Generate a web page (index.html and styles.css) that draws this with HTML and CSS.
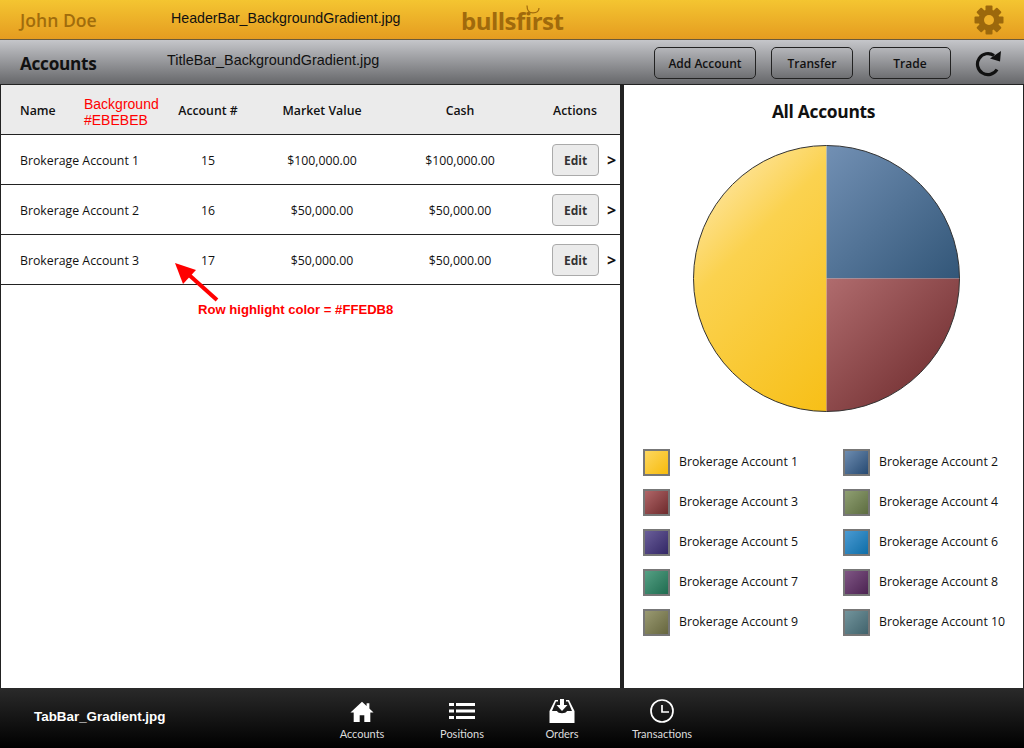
FILE: index.html

```html
<!DOCTYPE html>
<html>
    <head>
        <title>Accounts</title>
        <meta charset="utf-8">
        <link rel="stylesheet" href="styles.css">
    </head>
    <body>
        <div id="app">
            <div id="header">
                <div class="user">John Doe</div>
                <div class="logo">bullsfirst
                    <svg class="horns" width="14" height="9" viewBox="0 0 14 9"><path d="M1 0.500 C1 5.500 3 7.800 7 7.800 C11 7.800 13 5.500 13 3" fill="none" stroke="#a06a0c" stroke-width="1.200"/></svg>
                </div>
                <svg class="gear" width="30" height="30" viewBox="0 0 30 30">
                    <g fill="#9c680c">
                        <circle cx="15" cy="15" r="10.5"/>
                        <rect x="11.5" y="0.5" width="7" height="29" rx="1"/>
                        <rect x="11.5" y="0.5" width="7" height="29" rx="1" transform="rotate(45 15 15)"/>
                        <rect x="11.5" y="0.5" width="7" height="29" rx="1" transform="rotate(90 15 15)"/>
                        <rect x="11.5" y="0.5" width="7" height="29" rx="1" transform="rotate(135 15 15)"/>
                    </g>
                    <circle cx="15" cy="15" r="5" fill="#efb02a"/>
                </svg>
                <div class="note note_header">HeaderBar_BackgroundGradient.jpg</div>
            </div>
            <div id="titlebar">
                <h1>Accounts</h1>
                <div class="actions">
                    <button class="bar_button add">Add Account</button>
                    <button class="bar_button transfer">Transfer</button>
                    <button class="bar_button trade">Trade</button>
                    <svg class="refresh" width="28" height="28" viewBox="0 0 28 28">
                        <path d="M23 20.500 A10.500 10.500 0 1 1 20 6.500" fill="none" stroke="#111" stroke-width="3.200"/>
                        <path d="M27 2 L26 12.500 L16 9.500 Z" fill="#111"/>
                    </svg>
                </div>
                <div class="note note_title">TitleBar_BackgroundGradient.jpg</div>
            </div>
            <div id="main">
                <div id="accounts">
                    <div class="row head">
                        <div class="name">Name</div>
                        <div>Account #</div>
                        <div>Market Value</div>
                        <div>Cash</div>
                        <div class="actions_head">Actions</div>
                    </div>
                    <div class="row">
                        <div class="name">Brokerage Account 1</div>
                        <div>15</div>
                        <div>$100,000.00</div>
                        <div>$100,000.00</div>
                        <div class="edit_cell"><button class="edit">Edit</button><span class="go">&gt;</span></div>
                    </div>
                    <div class="row">
                        <div class="name">Brokerage Account 2</div>
                        <div>16</div>
                        <div>$50,000.00</div>
                        <div>$50,000.00</div>
                        <div class="edit_cell"><button class="edit">Edit</button><span class="go">&gt;</span></div>
                    </div>
                    <div class="row">
                        <div class="name">Brokerage Account 3</div>
                        <div>17</div>
                        <div>$50,000.00</div>
                        <div>$50,000.00</div>
                        <div class="edit_cell"><button class="edit">Edit</button><span class="go">&gt;</span></div>
                    </div>
                    <div class="note note_bg">Background<br>#EBEBEB</div>
                    <svg class="arrow" width="46" height="40" viewBox="0 0 46 40">
                        <path d="M42 37 L13 11" stroke="#f00" stroke-width="4" fill="none"/>
                        <path d="M0 0 L21 7 L8 21 Z" fill="#f00"/>
                    </svg>
                    <div class="note note_row">Row highlight color = #FFEDB8</div>
                </div>
                <div id="chart">
                    <h2>All Accounts</h2>
                    <svg class="pie" width="270" height="270" viewBox="0 0 270 270">
                        <defs>
                            <linearGradient id="pie_yellow" gradientUnits="userSpaceOnUse" x1="40" y1="40" x2="230" y2="230">
                                <stop offset="0" stop-color="#fde08a"/>
                                <stop offset="0.2" stop-color="#fbd24f"/>
                                <stop offset="0.85" stop-color="#f7bf17"/>
                            </linearGradient>
                            <linearGradient id="pie_blue" x1="0" y1="0" x2="1" y2="1">
                                <stop offset="0" stop-color="#7290b4"/>
                                <stop offset="1" stop-color="#325678"/>
                            </linearGradient>
                            <linearGradient id="pie_red" x1="0" y1="0" x2="1" y2="1">
                                <stop offset="0" stop-color="#b06c6e"/>
                                <stop offset="0.8" stop-color="#763335"/>
                            </linearGradient>
                        </defs>
                        <path d="M134.500 135.500 L134.500 2.500 A133 133 0 0 0 134.500 268.500 Z" fill="url(#pie_yellow)"/>
                        <path d="M134.500 135.500 L134.500 2.500 A133 133 0 0 1 267.500 135.500 Z" fill="url(#pie_blue)"/>
                        <path d="M134.500 135.500 L267.500 135.500 A133 133 0 0 1 134.500 268.500 Z" fill="url(#pie_red)"/>
                        <circle cx="134.500" cy="135.500" r="133" fill="none" stroke="#333" stroke-width="1"/>
                    </svg>
                    <div class="legend">
                        <div class="item"><span class="swatch c1"></span>Brokerage Account 1</div>
                        <div class="item"><span class="swatch c2"></span>Brokerage Account 2</div>
                        <div class="item"><span class="swatch c3"></span>Brokerage Account 3</div>
                        <div class="item"><span class="swatch c4"></span>Brokerage Account 4</div>
                        <div class="item"><span class="swatch c5"></span>Brokerage Account 5</div>
                        <div class="item"><span class="swatch c6"></span>Brokerage Account 6</div>
                        <div class="item"><span class="swatch c7"></span>Brokerage Account 7</div>
                        <div class="item"><span class="swatch c8"></span>Brokerage Account 8</div>
                        <div class="item"><span class="swatch c9"></span>Brokerage Account 9</div>
                        <div class="item"><span class="swatch c10"></span>Brokerage Account 10</div>
                    </div>
                </div>
            </div>
            <div id="tabbar">
                <div class="note note_tab">TabBar_Gradient.jpg</div>
                <div class="tab">
                    <svg width="26" height="24" viewBox="-1 -2 28 26"><path d="M13 1 L18 5.500 L18 2.500 L21 2.500 L21 8.200 L25.500 12.500 L22 12.500 L22 23 L15.500 23 L15.500 15.500 L10.500 15.500 L10.500 23 L4 23 L4 12.500 L0.500 12.500 Z" fill="#fff"/></svg>
                    <span>Accounts</span>
                </div>
                <div class="tab">
                    <svg width="28" height="24" viewBox="0 0 28 24"><g fill="#fff"><rect x="1" y="4" width="5" height="3"/><rect x="8" y="4" width="19" height="3"/><rect x="1" y="10.500" width="5" height="3"/><rect x="8" y="10.500" width="19" height="3"/><rect x="1" y="17" width="5" height="3"/><rect x="8" y="17" width="19" height="3"/></g></svg>
                    <span>Positions</span>
                </div>
                <div class="tab">
                    <svg width="26" height="24" viewBox="0 0 26 24">
                        <path d="M6 1 L9 1 L9 2.500 L7 2.500 L3 12 L8 12 C9 15 17 15 18 12 L23 12 L19 2.500 L17 2.500 L17 1 L20 1 L25.500 12 L25.500 24 L0.500 24 L0.500 12 Z" fill="#fff"/>
                        <path d="M11 0 L15 0 L15 6 L18.500 6 L13 12 L7.500 6 L11 6 Z" fill="#fff"/>
                    </svg>
                    <span>Orders</span>
                </div>
                <div class="tab">
                    <svg width="26" height="24" viewBox="0 0 26 24"><circle cx="13" cy="12" r="11" fill="none" stroke="#fff" stroke-width="1.700"/><path d="M13 6 L13 13 L20 13" fill="none" stroke="#fff" stroke-width="1.700"/></svg>
                    <span>Transactions</span>
                </div>
            </div>
        </div>
    </body>
</html>
```

FILE: styles.css

```css
* {
    box-sizing: border-box;
}

body {
    margin: 0;
    background: #fff;
    font-family: "Open Sans", sans-serif;
    color: #111;
}

#app {
    width: 1024px;
    height: 748px;
    display: flex;
    flex-direction: column;
    overflow: hidden;
}

.note {
    position: absolute;
    font-family: "Liberation Sans", sans-serif;
    font-size: 14px;
    color: #111;
    white-space: nowrap;
}

/* header */
#header {
    position: relative;
    height: 40px;
    flex: none;
    display: flex;
    align-items: center;
    padding: 0 20px;
    background: linear-gradient(#f4c531, #e59c20);
    border-bottom: 1px solid #6b5a3a;
}

.user {
    font-size: 17.6px;
    font-weight: 600;
    color: #a06c0c;
}

.logo {
    position: absolute;
    left: 461px;
    top: 5px;
    font-size: 24px;
    line-height: 31px;
    font-weight: 700;
    letter-spacing: -0.5px;
    color: #a06a0c;
}

.horns {
    position: absolute;
    left: 65px;
    top: 0;
}

.gear {
    position: absolute;
    left: 974px;
    top: 5px;
}

.note_header {
    left: 171px;
    top: 10px;
    font-size: 14.2px;
}

/* title bar */
#titlebar {
    position: relative;
    height: 45px;
    flex: none;
    display: flex;
    align-items: center;
    justify-content: space-between;
    padding: 0 20px;
    background: linear-gradient(#c5c6ca, #66676a);
    border-bottom: 1px solid #222;
}

h1 {
    margin: 2px 0 0;
    font-size: 17.2px;
    font-weight: 700;
    letter-spacing: -0.3px;
    color: #111;
}

.actions {
    display: flex;
    align-items: center;
    margin-top: 2px;
}

.bar_button {
    height: 32px;
    margin-right: 15px;
    padding: 0;
    border: 1px solid #222;
    border-radius: 5px;
    background: linear-gradient(#b5b6ba, #6e6f72);
    font-family: "Open Sans", sans-serif;
    font-size: 12px;
    font-weight: 600;
    color: #111;
}

.add {
    width: 102px;
}

.transfer {
    width: 82px;
    margin-right: 16px;
}

.trade {
    width: 82px;
    margin-right: 23px;
}

.refresh {
    margin-right: 2px;
}

.note_title {
    left: 167px;
    top: 12px;
    font-size: 14.4px;
}

/* accounts list */
#main {
    flex: 1;
    display: flex;
    min-height: 0;
    background: #222;
}

#accounts {
    position: relative;
    width: 619px;
    margin-left: 1px;
    background: #fff;
}

.row {
    display: grid;
    grid-template-columns: 157px 100px 128px 148px 86px;
    align-items: center;
    height: 50px;
    padding-top: 2px;
    border-bottom: 1px solid #222;
    font-size: 12.3px;
    text-align: center;
}

.head {
    background: #ebebeb;
    font-weight: 600;
}

.name {
    padding-left: 19px;
    text-align: left;
}

.actions_head {
    padding-right: 4px;
}

.edit_cell {
    display: flex;
    align-items: center;
    margin-top: -2px;
    padding-left: 18px;
}

.edit {
    width: 47px;
    height: 32px;
    padding: 2px 0 0;
    border: 1px solid #aaa;
    border-radius: 4px;
    background: #ebebeb;
    font-family: "Open Sans", sans-serif;
    font-size: 12px;
    font-weight: 700;
    color: #333;
}

.go {
    margin-left: 8px;
    font-size: 16px;
    font-weight: 700;
}

.note_bg {
    left: 83px;
    top: 11px;
    font-size: 14px;
    line-height: 16px;
    color: #f00;
}

.note_row {
    left: 197px;
    top: 217px;
    font-size: 13.100px;
    font-weight: 700;
    color: #f00;
}

.arrow {
    position: absolute;
    left: 174px;
    top: 178px;
}

/* chart */
#chart {
    width: 399px;
    margin-left: 4px;
    background: #fff;
    display: flex;
    flex-direction: column;
    align-items: center;
}

h2 {
    margin: 15px 0 0;
    font-size: 17.4px;
    line-height: 23px;
    font-weight: 700;
    letter-spacing: -0.3px;
    color: #111;
}

.pie {
    display: block;
    margin: 20px 0 0 6px;
}

.legend {
    display: grid;
    grid-template-columns: 200px 176px;
    grid-auto-rows: 40px;
    width: 376px;
    margin: 28px 0 0 15px;
}

.item {
    display: flex;
    align-items: center;
    font-size: 12.3px;
    color: #111;
}

.swatch {
    width: 27px;
    height: 27px;
    margin: 2px 9px 0 0;
    border: 2px solid #777;
}

.c1 { background: linear-gradient(135deg, #fdd75f, #f7bb0d); }
.c2 { background: linear-gradient(135deg, #6d8cb0, #274a72); }
.c3 { background: linear-gradient(135deg, #b06668, #6e2a2c); }
.c4 { background: linear-gradient(135deg, #8f9f72, #5d6d40); }
.c5 { background: linear-gradient(135deg, #6a5e99, #332766); }
.c6 { background: linear-gradient(135deg, #4a9ad2, #0f6ea8); }
.c7 { background: linear-gradient(135deg, #55a084, #1f6c50); }
.c8 { background: linear-gradient(135deg, #7f5684, #4c2352); }
.c9 { background: linear-gradient(135deg, #9a9a72, #66663e); }
.c10 { background: linear-gradient(135deg, #72949c, #41636c); }

/* tab bar */
#tabbar {
    position: relative;
    height: 60px;
    flex: none;
    display: flex;
    justify-content: center;
    background: linear-gradient(#2a2a2a, #000);
}

.tab {
    width: 100px;
    display: flex;
    flex-direction: column;
    align-items: center;
    padding-top: 11px;
    font-family: Lato, sans-serif;
    font-size: 11px;
    color: #ddd;
}

.tab span {
    margin-top: 4px;
}

.note_tab {
    left: 34px;
    top: 21px;
    font-weight: 700;
    font-size: 13.4px;
    color: #fff;
}
```
